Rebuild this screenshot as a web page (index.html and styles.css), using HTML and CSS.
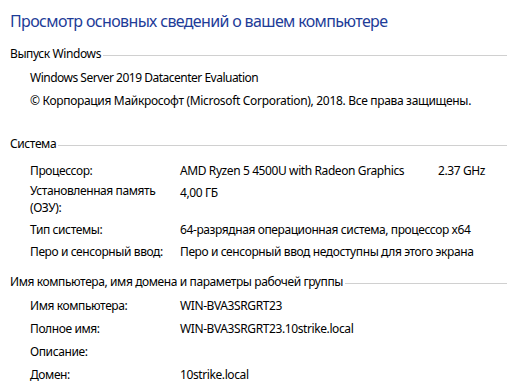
FILE: index.html
```html
<!DOCTYPE html>
<html lang="ru">
<head>
<meta charset="utf-8">
<title>Система</title>
<link rel="stylesheet" href="styles.css">
</head>
<body>
<div class="page">
  <h1 class="title">Просмотр основных сведений о вашем компьютере</h1>

  <section class="group edition">
    <div class="group-head"><span class="group-name">Выпуск Windows</span><span class="rule"></span></div>
    <div class="plain">
      <div class="line edition-name">Windows Server 2019 Datacenter Evaluation</div>
      <div class="line copyright">© Корпорация Майкрософт (Microsoft Corporation), 2018. Все права защищены.</div>
    </div>
  </section>

  <section class="group sys">
    <div class="group-head"><span class="group-name">Система</span><span class="rule"></span></div>
    <div class="grid">
      <div class="label">Процессор:</div>
      <div class="value cpu"><span class="cpu-name">AMD Ryzen 5 4500U with Radeon Graphics</span><span>2.37 GHz</span></div>
      <div class="label two-line">Установленная память<br>(ОЗУ):</div>
      <div class="value">4,00 ГБ</div>
      <div class="label">Тип системы:</div>
      <div class="value">64-разрядная операционная система, процессор x64</div>
      <div class="label">Перо и сенсорный ввод:</div>
      <div class="value">Перо и сенсорный ввод недоступны для этого экрана</div>
    </div>
  </section>

  <section class="group net">
    <div class="group-head"><span class="group-name">Имя компьютера, имя домена и параметры рабочей группы</span><span class="rule"></span></div>
    <div class="grid">
      <div class="label">Имя компьютера:</div>
      <div class="value">WIN-BVA3SRGRT23</div>
      <div class="label">Полное имя:</div>
      <div class="value">WIN-BVA3SRGRT23.10strike.local</div>
      <div class="label">Описание:</div>
      <div class="value"></div>
      <div class="label">Домен:</div>
      <div class="value">10strike.local</div>
    </div>
  </section>
</div>
</body>
</html>
```

FILE: styles.css
```css
html, body {
  margin: 0;
  padding: 0;
  background: #ffffff;
}

body {
  font-family: "Noto Sans", "Open Sans", sans-serif;
  font-size: 12px;
  letter-spacing: -0.4px;
  color: #000000;
  width: 507px;
  height: 392px;
  overflow: hidden;
}

.page {
  padding: 8px 0 0 10px;
}

.title {
  margin: 0;
  font-size: 16px;
  font-weight: normal;
  line-height: 26px;
  letter-spacing: -0.65px;
  color: #1e3c98;
}

.group-head {
  display: flex;
  align-items: center;
  line-height: 16px;
}

.group-name {
  white-space: nowrap;
}

.rule {
  flex: 1;
  height: 0;
  border-top: 1px solid #d0d0d0;
  margin-left: 2px;
  position: relative;
  top: 1px;
}

.edition {
  margin-top: 12px;
}

.plain {
  padding-left: 20px;
  padding-top: 4px;
}

.line {
  line-height: 15px;
  padding: 4px 0;
  white-space: nowrap;
}

.edition-name {
  letter-spacing: -0.5px;
}

.copyright {
  letter-spacing: -0.32px;
}

.sys {
  margin-top: 24px;
}

.grid {
  display: grid;
  grid-template-columns: 150px 1fr;
  padding-left: 20px;
}

.label, .value {
  white-space: nowrap;
}

.sys .grid {
  padding-top: 7px;
}

.sys .label, .sys .value {
  line-height: 15px;
  padding: 3.5px 0;
}

.sys .two-line {
  line-height: 16.5px;
  padding: 2px 0;
}

.cpu {
  display: flex;
}

.cpu-name {
  width: 258px;
}

.net {
  margin-top: 12px;
}

.net .grid {
  padding-top: 4px;
}

.net .label, .net .value {
  line-height: 15px;
  padding: 4px 0;
}
```
